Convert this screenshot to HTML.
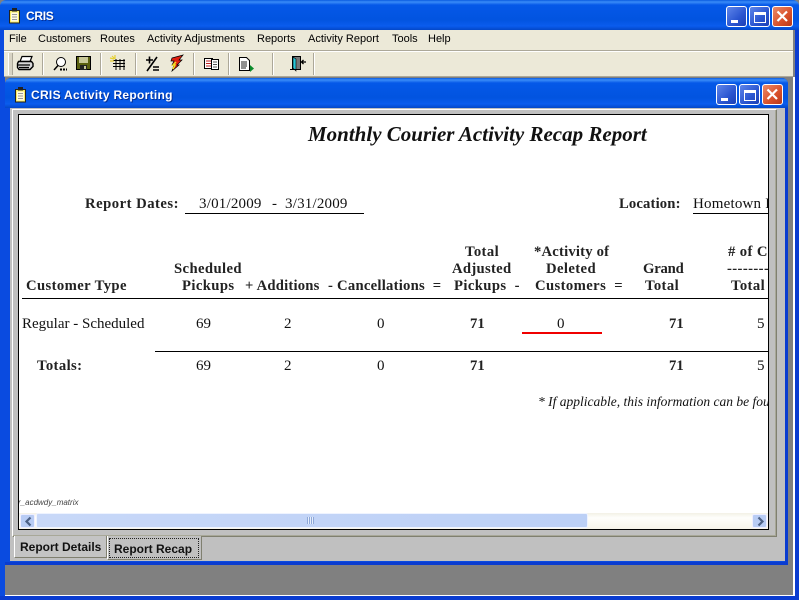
<!DOCTYPE html>
<html><head><meta charset="utf-8"><style>
html,body{margin:0;padding:0;background:#808080}
#r{position:relative;width:799px;height:600px;overflow:hidden;background:#808080}
.a{position:absolute}
.t{position:absolute;white-space:nowrap;line-height:16px}
.m{font:11px "Liberation Sans",sans-serif;color:#000;top:31px;height:16px;position:absolute;white-space:nowrap;line-height:16px}
.s{font-family:"Liberation Serif",serif;font-size:15px;color:#111}
.b{font-family:"Liberation Serif",serif;font-size:14.67px;font-weight:bold;color:#222;letter-spacing:.4px}
.sep{position:absolute;top:53px;width:1px;height:22px;background:#aca899;border-right:1px solid #fff}
.btn{position:absolute;box-sizing:border-box;width:21px;height:21px;border:1px solid #fff;border-radius:3px;background:linear-gradient(135deg,#5f86ea,#2a55d0 60%,#1c3fb5)}
.x{background:linear-gradient(135deg,#ea8a6a,#d8502a 60%,#b8381a)}
</style></head><body><div id="r">
<!-- outer title -->
<div class="a" style="left:0;top:0;width:799px;height:30px;border-radius:6px 6px 0 0;background:linear-gradient(#0a5be0 0,#3a8cf8 2px,#0558e8 5px,#0254e0 20px,#0a5cee 26px,#0348c8 30px)"></div>
<div class="a" style="left:0;top:30px;width:5px;height:570px;background:#0a4be0"></div>
<div class="a" style="left:795px;top:30px;width:4px;height:570px;background:#0a3cd0"></div>
<div class="a" style="left:0;top:596px;width:799px;height:4px;background:#0a3cd0"></div>
<svg class="a" style="left:9px;top:8px" width="12" height="16"><rect x=".5" y="2.500" width="10" height="12.500" fill="#f8ec60" stroke="#222"/><rect x="3" y="0" width="5" height="3.500" fill="#222"/><rect x="2" y="4.500" width="7" height="9" fill="#fffbe0"/><path d="M3 6.500h5M3 9h5M3 11.500h5" stroke="#999"/></svg>
<div class="t" style="left:26px;top:9px;font:bold 12px 'Liberation Sans',sans-serif;letter-spacing:-.3px;color:#fff;text-shadow:1px 1px 0 #03309a">CRIS</div>
<div class="btn" style="left:726px;top:6px"><div class="a" style="left:4px;bottom:3px;width:7px;height:3px;background:#fff"></div></div>
<div class="btn" style="left:749px;top:6px"><div class="a" style="left:4px;top:5px;border:1px solid #fff;border-top:3px solid #fff;box-sizing:border-box;width:12px;height:11px"></div></div>
<div class="btn x" style="left:772px;top:6px"><svg class="a" style="left:3px;top:3px" width="13" height="13"><path d="M1.500 1.500L11 11M11 1.500L1.500 11" stroke="#fff" stroke-width="2.200"/></svg></div>
<!-- menu -->
<div class="a" style="left:4px;top:30px;width:789px;height:20px;background:#ece9d8"></div>
<div class="a" style="left:4px;top:50px;width:789px;height:1px;background:#aca899"></div>
<div class="a" style="left:4px;top:51px;width:789px;height:26px;background:#ece9d8;border-top:1px solid #fff;box-sizing:border-box;"></div>
<div class="a" style="left:4px;top:76px;width:789px;height:1px;background:#aca899"></div>
<span class="m" style="left:9px">File</span><span class="m" style="left:38px">Customers</span><span class="m" style="left:100px">Routes</span><span class="m" style="left:147px">Activity Adjustments</span><span class="m" style="left:257px">Reports</span><span class="m" style="left:308px">Activity Report</span><span class="m" style="left:392px">Tools</span><span class="m" style="left:428px">Help</span>
<!-- toolbar -->
<div class="a" style="left:8px;top:53px;width:3px;height:22px;background:#d8d4c4;border-left:1px solid #fff;border-right:1px solid #aca899"></div>
<div class="sep" style="left:42px"></div><div class="sep" style="left:100px"></div><div class="sep" style="left:135px"></div><div class="sep" style="left:193px"></div><div class="sep" style="left:228px"></div><div class="sep" style="left:272px"></div><div class="sep" style="left:313px"></div>
<svg class="a" style="left:0;top:50px" width="340" height="28" fill="none">
<!-- printer -->
<path d="M22 6.500h10l-2 5H20z" fill="#fff" stroke="#000" stroke-width="1.200"/><path d="M18.500 11.500h13l1.500 2v3l-3 3h-11l-1.500-2v-4z" fill="#d8d8d8" stroke="#000" stroke-width="1.400"/><path d="M18 15h12M19 17.500h10" stroke="#000" stroke-width="1.200"/>
<!-- find -->
<circle cx="61" cy="12" r="4.500" fill="#fff" stroke="#000"/><path d="M58 15.500l-4 4.500" stroke="#000" stroke-width="1.500"/><path d="M60 19.500h7" stroke="#000" stroke-width="2" stroke-dasharray="2 1"/>
<!-- save -->
<rect x="76.500" y="6.500" width="14" height="13" fill="#5a6010" stroke="#000"/><rect x="79" y="7" width="9" height="6" fill="#c8c898"/><rect x="80" y="15" width="7" height="5" fill="#222"/><rect x="84" y="16" width="2" height="3" fill="#c8c898"/>
<!-- grid -->
<path d="M113 10.500h12M113 13.500h12M113 16.500h12M116 9v11M120 9v11M124 9v11" stroke="#000"/><path d="M112 6l3 3M115 5v4M110 8l4 1M110 11h4" stroke="#e6d030" stroke-width="1.200"/>
<!-- plus/equals -->
<path d="M146 10h7M149.500 6.500v7M147 21l10-14M153 17h6M153 20h6" stroke="#000" stroke-width="1.600"/>
<!-- bolt -->
<path d="M172 8l11-3-4 5h3l-5 5h2l-7 6 2-6h-2l2-4h-3z" fill="#e02010" stroke="#000" stroke-width=".7"/><path d="M176 12l-3 3h2l-2 4" stroke="#f0e020" stroke-width="1.500"/>
<!-- documents -->
<rect x="204.500" y="8.500" width="8" height="10" fill="#fff" stroke="#000"/><rect x="211.500" y="9.500" width="7" height="10" fill="#fff" stroke="#000"/><path d="M206 11h5M206 13.500h5M206 16h5" stroke="#c02020"/><path d="M213 12h4M213 14.500h4M213 17h4" stroke="#555"/>
<!-- page + arrow -->
<path d="M239.500 7.500h7l3 3v10h-10z" fill="#fff" stroke="#000"/><path d="M241 12h6M241 14h6M241 16h6M241 18h5" stroke="#222"/><path d="M250 15l4 3.500-4 3.500z" fill="#0a8a2a"/>
<!-- door -->
<rect x="292.500" y="6.500" width="8" height="13" fill="#777" stroke="#000"/><path d="M293 7l3 2v12l-3-3z" fill="#28c8d8" stroke="#000" stroke-width=".6"/><path d="M302 12h4M303.500 10l-2 2 2 2" stroke="#000" stroke-width="1.300"/><path d="M290 19.500h10" stroke="#000"/>
</svg>
<!-- child window -->
<div class="a" style="left:5px;top:78px;width:783px;height:487px;border-radius:6px 6px 0 0;background:#0a4be0;box-shadow:inset -3px 0 0 #0a3cd0,inset 0 -3px 0 #0a3cd0"></div>
<div class="a" style="left:5px;top:78px;width:783px;height:30px;border-radius:6px 6px 0 0;background:linear-gradient(#0a5be0 0,#3a8cf8 2px,#0558e8 5px,#0254e0 20px,#0a5cee 26px,#0348c8 30px)"></div>
<div class="a" style="left:10px;top:108px;width:775px;height:453px;background:#c0c0c0"></div>
<div class="a" style="left:5px;top:595px;width:790px;height:1px;background:#fff"></div>
<div class="a" style="left:793px;top:77px;width:2px;height:519px;background:#fff"></div>
<svg class="a" style="left:15px;top:87px" width="12" height="16"><rect x=".5" y="2.500" width="10" height="12.500" fill="#f8ec60" stroke="#222"/><rect x="3" y="0" width="5" height="3.500" fill="#222"/><rect x="2" y="4.500" width="7" height="9" fill="#fffbe0"/><path d="M3 6.500h5M3 9h5M3 11.500h5" stroke="#999"/></svg>
<div class="t" style="left:31px;top:88px;font:bold 12px 'Liberation Sans',sans-serif;letter-spacing:.3px;color:#fff;text-shadow:1px 1px 0 #03309a">CRIS Activity Reporting</div>
<div class="btn" style="left:716px;top:84px"><div class="a" style="left:4px;bottom:3px;width:7px;height:3px;background:#fff"></div></div>
<div class="btn" style="left:739px;top:84px"><div class="a" style="left:4px;top:5px;border:1px solid #fff;border-top:3px solid #fff;box-sizing:border-box;width:12px;height:11px"></div></div>
<div class="btn x" style="left:762px;top:84px"><svg class="a" style="left:3px;top:3px" width="13" height="13"><path d="M1.500 1.500L11 11M11 1.500L1.500 11" stroke="#fff" stroke-width="2.200"/></svg></div>
<!-- tab panel -->
<div class="a" style="left:12px;top:109px;width:765px;height:428px;box-sizing:border-box;border:1px solid #808070;border-left-color:#fff;border-top-color:#fff;background:#c0c0c0;box-shadow:inset -1px -1px 0 #a8a898"></div>
<!-- report -->
<div class="a" style="left:18px;top:114px;width:751px;height:416px;box-sizing:border-box;border:1px solid #000;background:#fff;overflow:hidden" id="p">
<div class="t" style="left:289px;top:7px;font:italic bold 21px 'Liberation Serif',serif;line-height:24px;color:#111">Monthly Courier Activity Recap Report</div>
<div class="t b" style="left:66px;top:81px;letter-spacing:.5px">Report Dates:</div>
<div class="t s" style="left:180px;top:81px;letter-spacing:.2px">3/01/2009</div>
<div class="t s" style="left:253px;top:81px">-</div>
<div class="t s" style="left:266px;top:81px;letter-spacing:.2px">3/31/2009</div>
<div class="a" style="left:166px;top:98px;width:179px;height:1px;background:#000"></div>
<div class="t b" style="left:600px;top:81px;letter-spacing:.15px">Location:</div>
<div class="t s" style="left:674px;top:81px;letter-spacing:.2px">Hometown Pickup</div>
<div class="a" style="left:674px;top:98px;width:80px;height:1px;background:#000"></div>
<div class="t b" style="left:155px;top:146px">Scheduled</div>
<div class="t b" style="left:7px;top:163px">Customer Type</div>
<div class="t b" style="left:163px;top:163px">Pickups</div>
<div class="t b" style="left:226px;top:163px;letter-spacing:.2px">+ Additions</div>
<div class="t b" style="left:309px;top:163px;letter-spacing:.25px">- Cancellations&nbsp; =</div>
<div class="t b" style="left:446px;top:129px">Total</div>
<div class="t b" style="left:433px;top:146px;letter-spacing:.3px">Adjusted</div>
<div class="t b" style="left:435px;top:163px">Pickups&nbsp; -</div>
<div class="t b" style="left:515px;top:129px;letter-spacing:.2px">*Activity of</div>
<div class="t b" style="left:527px;top:146px">Deleted</div>
<div class="t b" style="left:516px;top:163px">Customers&nbsp; =</div>
<div class="t b" style="left:624px;top:146px;letter-spacing:-.2px">Grand</div>
<div class="t b" style="left:626px;top:163px">Total</div>
<div class="t b" style="left:709px;top:129px"># of Customers</div>
<div class="t b" style="left:708px;top:146px">--------------</div>
<div class="t b" style="left:712px;top:163px">Total</div>
<div class="a" style="left:3px;top:183px;width:747px;height:1px;background:#000"></div>
<div class="t s" style="left:3px;top:201px">Regular - Scheduled</div>
<div class="t s" style="left:177px;top:201px">69</div><div class="t s" style="left:265px;top:201px">2</div><div class="t s" style="left:358px;top:201px">0</div>
<div class="t b" style="left:451px;top:201px;letter-spacing:0">71</div>
<div class="t s" style="left:538px;top:201px">0</div>
<div class="a" style="left:503px;top:217px;width:80px;height:2px;background:#f00000"></div>
<div class="t b" style="left:650px;top:201px;letter-spacing:0">71</div>
<div class="t s" style="left:738px;top:201px">5</div>
<div class="a" style="left:136px;top:236px;width:614px;height:1px;background:#000"></div>
<div class="t b" style="left:18px;top:243px">Totals:</div>
<div class="t s" style="left:177px;top:243px">69</div><div class="t s" style="left:265px;top:243px">2</div><div class="t s" style="left:358px;top:243px">0</div>
<div class="t b" style="left:451px;top:243px;letter-spacing:0">71</div>
<div class="t b" style="left:650px;top:243px;letter-spacing:0">71</div>
<div class="t s" style="left:738px;top:243px">5</div>
<div class="t" style="left:519px;top:279px;font:italic 13.5px 'Liberation Serif',serif;line-height:16px;color:#111">* If applicable, this information can be found elsewhere</div>
<div class="t" style="left:-1px;top:382px;font:italic 8px 'Liberation Sans',sans-serif;line-height:12px;color:#444">r_acdwdy_matrix</div>
<!-- scrollbar -->
<div class="a" style="left:0;top:398px;width:749px;height:16px;background:linear-gradient(#f3f1e6,#fefefb 30%,#f6f4ea)"></div>
<div class="a" style="left:1px;top:399px;width:15px;height:14px;box-sizing:border-box;border:1px solid #eef;border-radius:2px;background:#b8ccf4"><svg class="a" style="left:3px;top:1px" width="9" height="11"><path d="M6.500 1.500L2.500 5.500 6.500 9.500" fill="none" stroke="#4d6185" stroke-width="2.200"/></svg></div>
<div class="a" style="left:17px;top:398px;width:552px;height:15px;box-sizing:border-box;border:1px solid #eef3ff;border-radius:2px;background:linear-gradient(90deg,#c8d8f8,#bcd0f6)"></div>
<div class="a" style="left:288px;top:402px;width:7px;height:7px;background:repeating-linear-gradient(90deg,#8ea8d8 0 1px,#e6eefc 1px 2px)"></div>
<div class="a" style="left:733px;top:399px;width:15px;height:14px;box-sizing:border-box;border:1px solid #eef;border-radius:2px;background:#b8ccf4"><svg class="a" style="left:3px;top:1px" width="9" height="11"><path d="M2.500 1.500L6.500 5.500 2.500 9.500" fill="none" stroke="#4d6185" stroke-width="2.200"/></svg></div>
</div>
<!-- tabs -->
<div class="a" style="left:14px;top:536px;width:93px;height:22px;box-sizing:border-box;background:#c4c4c4;border-left:1px solid #fff;border-bottom:1px solid #808070;border-right:1px solid #808070"></div>
<div class="t" style="left:20px;top:539px;font:bold 12px 'Liberation Sans',sans-serif;line-height:16px;color:#111">Report Details</div>
<div class="a" style="left:107px;top:536px;width:95px;height:24px;box-sizing:border-box;background:#c0c0c0;border-left:1px solid #fff;border-bottom:1px solid #808070;border-right:1px solid #808070"></div>
<div class="a" style="left:109px;top:538px;width:90px;height:20px;box-sizing:border-box;border:1px dotted #222"></div>
<div class="t" style="left:114px;top:541px;font:bold 12px 'Liberation Sans',sans-serif;line-height:16px;color:#111">Report Recap</div>
</div></body></html>
